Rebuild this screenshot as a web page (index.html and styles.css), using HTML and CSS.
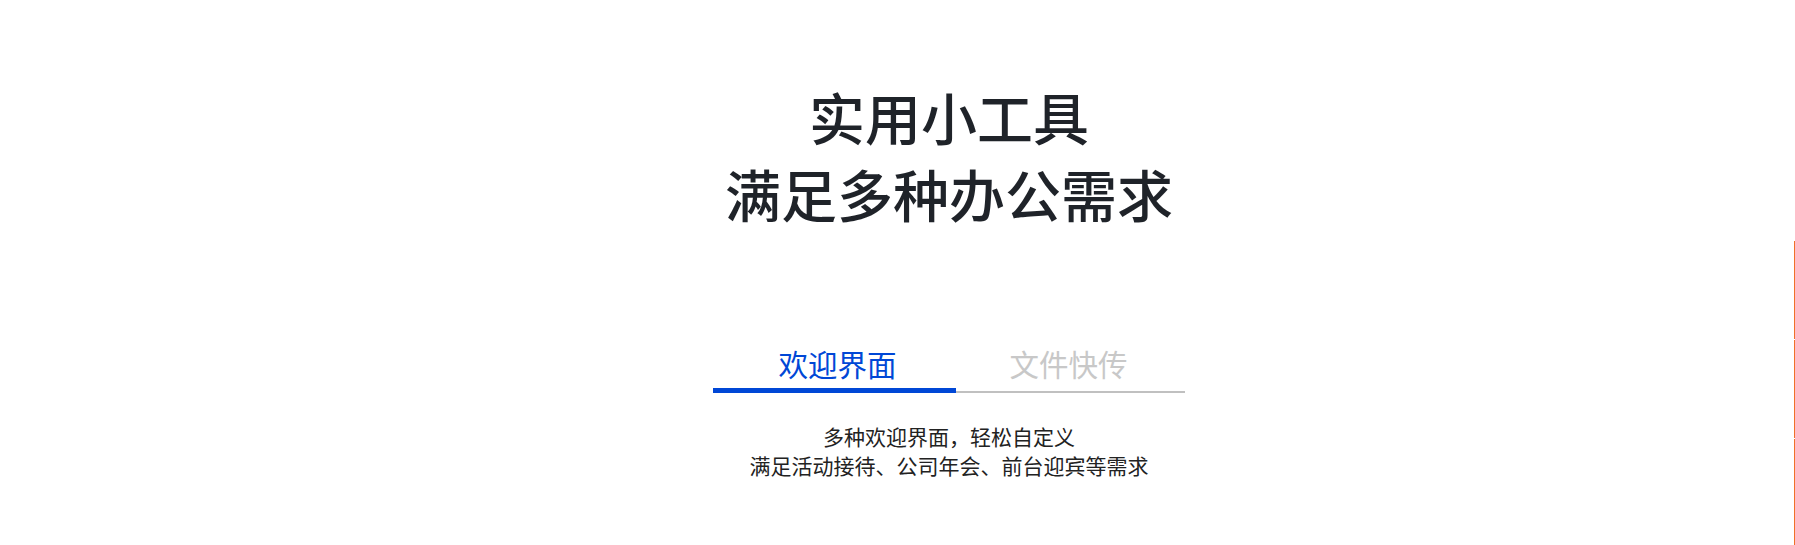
FILE: index.html
```html
<!DOCTYPE html>
<html lang="zh-CN">
<head>
<meta charset="utf-8">
<title>实用小工具</title>
<link rel="stylesheet" href="styles.css">
</head>
<body>
<main class="page">
  <section class="hero">
    <h1 class="title">实用小工具<br>满足多种办公需求</h1>
    <div class="tabs">
      <div class="tab active">欢迎界面</div>
      <div class="tab second">文件快传</div>
    </div>
    <p class="desc">多种欢迎界面，轻松自定义<br>满足活动接待、公司年会、前台迎宾等需求</p>
  </section>
</main>
<aside class="side-rail">
  <div class="rail-item"></div>
  <div class="rail-item"></div>
  <div class="rail-item tall"></div>
</aside>
</body>
</html>
```

FILE: styles.css
```css
html, body {
  margin: 0;
  padding: 0;
  background: #ffffff;
}

body {
  font-family: "Noto Sans CJK SC", "Noto Sans", "Liberation Sans", sans-serif;
  color: #1f2329;
  overflow: hidden;
}

.page {
  padding-left: 103px;
  box-sizing: border-box;
  width: 100%;
}

.hero {
  display: flex;
  flex-direction: column;
  align-items: center;
  padding-top: 77px;
}

.title {
  margin: 0;
  font-size: 56px;
  line-height: 77px;
  font-weight: 500;
  text-align: center;
  color: #1f2329;
}

.tabs {
  display: grid;
  grid-template-columns: 243px 229px;
  margin-top: 112px;
}

.tab {
  font-size: 29.5px;
  line-height: 40px;
  font-weight: 400;
  text-align: center;
  color: #c8c8c8;
  padding-bottom: 8px;
  border-bottom: 2px solid #c0c0c0;
}

.tab.active {
  color: #0047d6;
  padding-left: 6px;
  padding-bottom: 5px;
  border-bottom: 5px solid #0047d6;
}

.tab.second {
  padding-right: 4px;
}

.desc {
  margin: 29px 0 0;
  font-size: 21px;
  line-height: 29px;
  text-align: center;
  color: #222222;
}

.side-rail {
  position: fixed;
  right: 0;
  top: 241px;
  display: flex;
  flex-direction: column;
  gap: 1px;
}

.rail-item {
  width: 1px;
  height: 98px;
  background: #f07028;
}

.rail-item.tall {
  height: 120px;
}
```
